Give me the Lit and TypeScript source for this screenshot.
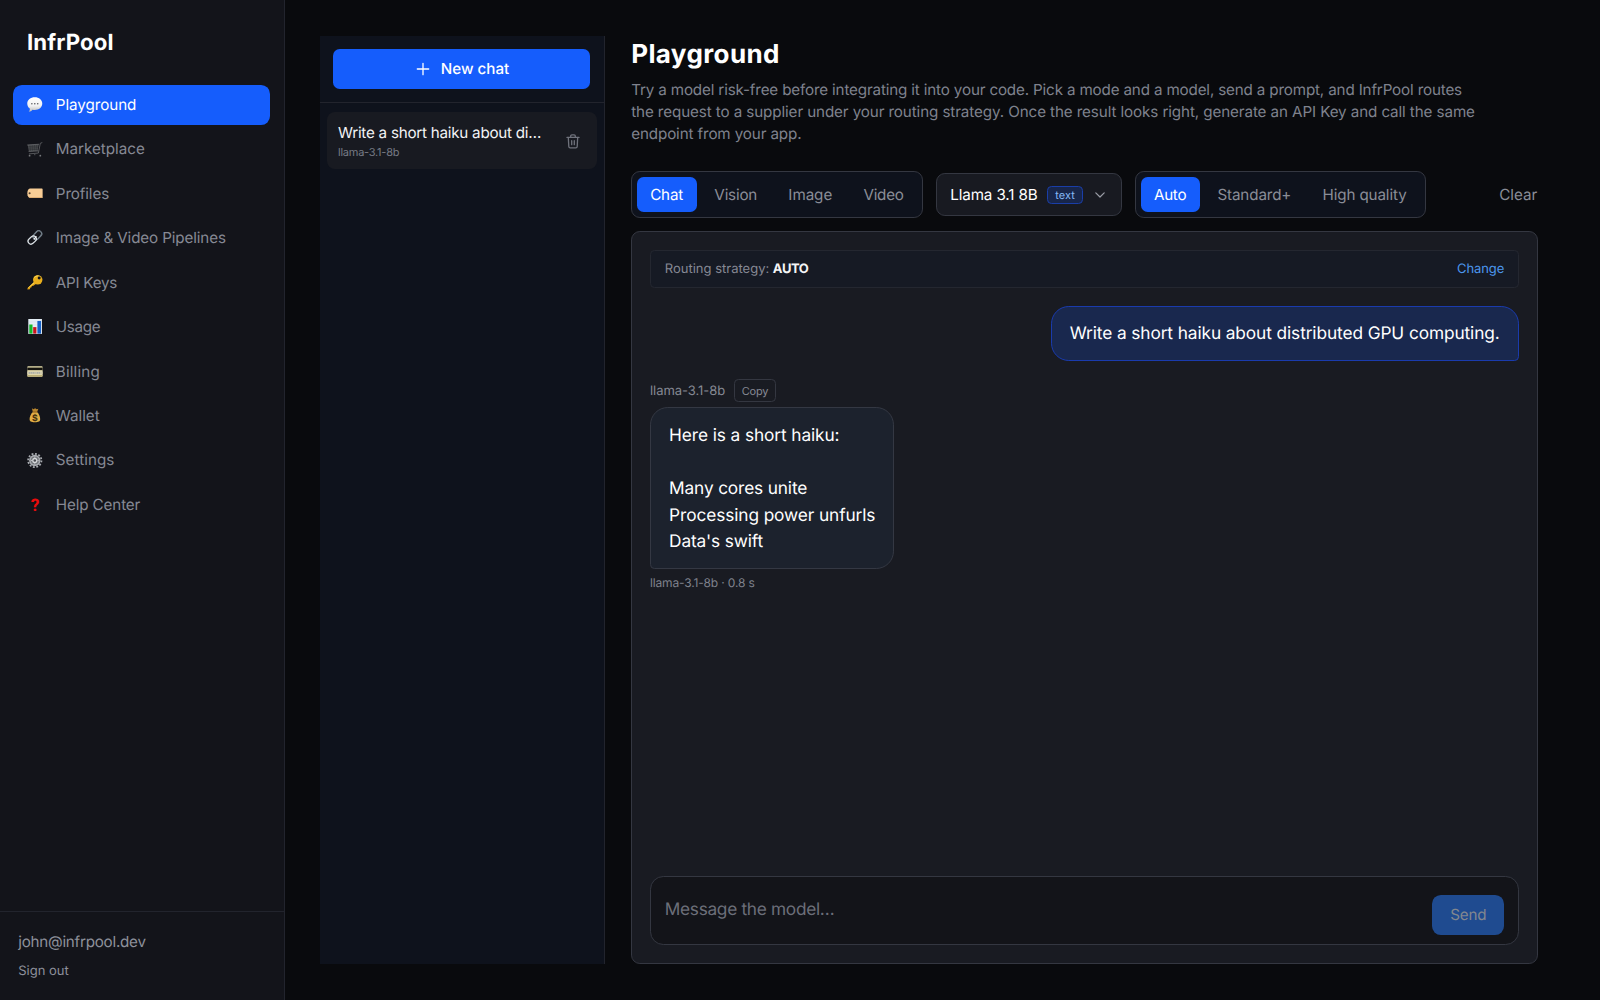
import { LitElement, html, css, svg, type TemplateResult, type SVGTemplateResult } from "lit";
import { customElement, property, state } from "lit/decorators.js";
import { classMap } from "lit/directives/class-map.js";

const ICONS: Record<string, SVGTemplateResult> = {
  chat: svg`
    <defs><linearGradient id="bub" x1="0" y1="0" x2="0" y2="1"><stop offset="0" stop-color="#ffffff"/><stop offset=".6" stop-color="#f1f1f1"/><stop offset="1" stop-color="#b9b9b9"/></linearGradient></defs>
    <path d="M24 .5C37 .5 47 8.500 47 20S37 40 24 40C21.500 40 19 39.700 17 39.100C14.500 42.500 10.500 45 5.500 45.500C8 42.500 9.200 39 8.600 35.700C4 32.300 .8 27 .8 20C.8 8.500 11 .5 24 .5Z" fill="url(#bub)"/>
    <g fill="#57575c"><circle cx="15" cy="21" r="2.400"/><circle cx="24" cy="21" r="2.400"/><circle cx="33" cy="21" r="2.400"/></g>`,
  cart: svg`
    <path d="M2 9L36 7L33 27L6 29Z" fill="#4c4e52"/>
    <g fill="none" stroke="#24262a" stroke-width="1.200"><path d="M4 14L35 12.500M4.500 19L34.500 17.500M5.500 24L34 22.500M9 9L11 29M16 8.500L17 28.500M23 8L22.500 28M30 7.500L28 27.500"/></g>
    <g fill="none" stroke="#6f7174" stroke-width="2.200" stroke-linecap="round"><path d="M46 2L41 4L35 34L7 36.500M2 9L36 7M6 29L34 27.500"/></g>
    <circle cx="8" cy="42" r="2.800" fill="#77797c"/><circle cx="41" cy="42" r="2.800" fill="#77797c"/><circle cx="24" cy="39" r="1.800" fill="#5d5f62"/>`,
  tag: svg`
    <path d="M10 8H46C47 8 48 9 48 10V35C48 36 47 37 46 37H10C5 37 1 31 1 22.500S5 8 10 8Z" fill="#f8cd95"/>
    <path d="M3 31C5 35 7 37 10 37H46C47 37 48 36 48 35V34H10C7 34 5 33 3 31Z" fill="#dfae74"/>
    <circle cx="8" cy="22.500" r="3.200" fill="#53412e"/>`,
  link: svg`
    <g fill="none" stroke-linecap="round">
      <rect x="-15" y="-9" width="30" height="18" rx="9" transform="translate(32 16) rotate(-47)" stroke="#8d9aa5" stroke-width="4"/>
      <rect x="-15" y="-9" width="30" height="18" rx="9" transform="translate(32 16) rotate(-47)" stroke="#27323b" stroke-width="1"/>
      <rect x="-14" y="-9" width="28" height="18" rx="9" transform="translate(16 31) rotate(-42)" stroke="#dde3e8" stroke-width="3.800"/>
      <path d="M22 28L28 20" stroke="#f4f6f8" stroke-width="3.500"/>
    </g>`,
  key: svg`
    <path d="M23 21L2 40L1 45L9 44L10 39L14 38L15 34L20 33L28 27Z" fill="#dd9d12"/>
    <path d="M23 20L3 39.500L4 41L25 24Z" fill="#fbd34a"/>
    <circle cx="33" cy="15" r="14.500" fill="#e8ae1c"/><path d="M20 12A14 14 0 0 1 44 6A18 18 0 0 0 20 12Z" fill="#ffe066"/>
    <circle cx="37.500" cy="9.500" r="4.600" fill="#14151a"/>`,
  chart: svg`
    <rect x="4" y="0" width="42" height="46" fill="#e3edf5"/>
    <path d="M4 9H46M4 18H46M4 27H46M4 36H46" stroke="#c3d4e2" stroke-width="1"/>
    <rect x="7" y="17" width="10" height="28" fill="#13b92a"/><rect x="19" y="25" width="10" height="20" fill="#c9131d"/><rect x="32" y="6" width="11" height="39" fill="#1460c8"/>`,
  card: svg`
    <rect x="1" y="7" width="47" height="32" rx="2.500" fill="#e9dfae"/>
    <rect x="1" y="11" width="47" height="8" fill="#15140f"/>
    <rect x="1" y="23" width="47" height="9" fill="#cfc9ac"/>
    <path d="M6 27.500H26M30 27.500H40" stroke="#8e9aa8" stroke-width="3" stroke-dasharray="4 2"/>
    <rect x="1" y="34" width="47" height="5" rx="2" fill="#b9ac74"/>`,
  bag: svg`
    <path d="M15 1L20 4L25 1L30 4L35 2L31 12H18Z" fill="#b9862f"/>
    <path d="M18 12H31C37 18 41 27 40.500 35C40 42 36 44 24 44S8.500 42 8 35C7.500 27 12 18 18 12Z" fill="#e2ae45"/>
    <path d="M17 12.500H32" stroke="#8a5a1b" stroke-width="3"/>
    <text x="24.200" y="39" font-family="Inter, sans-serif" font-weight="700" font-size="27" text-anchor="middle" fill="#47320f">$</text>`,
  gear: svg`
    <circle cx="24" cy="23" r="20.500" fill="none" stroke="#a8abb0" stroke-width="5.500" stroke-dasharray="5.800 4.930"/>
    <circle cx="24" cy="23" r="17.500" fill="#a9acb1"/>
    <circle cx="24" cy="23" r="12.500" fill="#73767b"/>
    <circle cx="24" cy="23" r="8" fill="#d6d8db"/><circle cx="24" cy="23" r="4" fill="#4a4c51"/>
    <path d="M24 11V15M24 31V35M12 23H16M32 23H36" stroke="#c4c6ca" stroke-width="3"/>`,
  help: svg`<text x="24.500" y="42" font-family="Roboto, sans-serif" font-weight="700" font-size="53" text-anchor="middle" fill="#ea0b0b">?</text>`,
};

interface NavItem { icon: string; label: string; track: string; }

const NAV: NavItem[] = [
  { icon: "chat", label: "Playground", track: "t05" },
  { icon: "cart", label: "Marketplace", track: "t00" },
  { icon: "tag", label: "Profiles", track: "t10" },
  { icon: "link", label: "Image & Video Pipelines", track: "t12" },
  { icon: "key", label: "API Keys", track: "t24" },
  { icon: "chart", label: "Usage", track: "t30" },
  { icon: "card", label: "Billing", track: "w15" },
  { icon: "bag", label: "Wallet", track: "t00" },
  { icon: "gear", label: "Settings", track: "w05" },
  { icon: "help", label: "Help Center", track: "t12" },
];

const tracking = css`
  .w15 { letter-spacing: 0.17px; }
  .w05 { letter-spacing: 0.06px; }
  .t00 { letter-spacing: 0; }
  .t05 { letter-spacing: -0.05px; }
  .t10 { letter-spacing: -0.1px; }
  .t12 { letter-spacing: -0.12px; }
  .t16 { letter-spacing: -0.155px; }
  .t20 { letter-spacing: -0.19px; }
  .t24 { letter-spacing: -0.24px; }
  .t30 { letter-spacing: -0.31px; }
  .t40 { letter-spacing: -0.41px; }
`;

@customElement("nav-sidebar")
export class NavSidebar extends LitElement {
  @state() private active = "Playground";

  static styles = [tracking, css`
    :host { display: flex; flex-direction: column; box-sizing: border-box; width: 285px; flex: none; background: #13141a; border-right: 1px solid #22242d; }
    .brand { padding: 27px 27px 0; height: 31px; line-height: 31px; font-size: 22.2px; font-weight: 700; letter-spacing: 0.12px; color: #fff; }
    .nav { display: flex; flex-direction: column; gap: 4.440px; padding: 26.900px 13.900px 0 13.400px; }
    .item { display: flex; align-items: center; gap: 13.300px; height: 40px; padding: 0 13.300px 0 13.500px; border-radius: 8.900px; color: #868994; cursor: pointer; line-height: 22px; }
    .item.active { background: #155dfc; color: #fff; }
    .icon { width: 15.600px; height: 15.600px; flex: none; overflow: visible; }
    .foot { margin-top: auto; box-sizing: border-box; height: 88.600px; border-top: 1px solid #22242d; padding: 18.800px 18.200px 0; color: #8d909a; }
    .mail { line-height: 22.200px; }
    .out { margin-top: 9.300px; font-size: 13px; line-height: 17.800px; }
  `];

  render() {
    return html`
      <div class="brand">InfrPool</div>
      <nav class="nav">
        ${NAV.map((n) => html`
          <div class=${classMap({ item: true, active: n.label === this.active })} @click=${() => (this.active = n.label)}>
            <svg class="icon" viewBox="0 0 48 48" aria-hidden="true">${ICONS[n.icon]}</svg>
            <span class=${n.track}>${n.label}</span>
          </div>`)}
      </nav>
      <div class="foot">
        <div class="mail t24">john@infrpool.dev</div>
        <div class="out">Sign out</div>
      </div>`;
  }
}

@customElement("chat-list")
export class ChatList extends LitElement {
  static styles = [tracking, css`
    :host { display: flex; flex-direction: column; box-sizing: border-box; width: 284.500px; flex: none; background: #0e121c; border-right: 1px solid #22242d; }
    .top { padding: 13.300px; border-bottom: 1px solid #22242d; }
    .new { display: flex; align-items: center; justify-content: center; gap: 11px; box-sizing: border-box; height: 40px; padding: 1px 0 0 1.500px; border-radius: 6.700px; background: #155dfc; color: #fff; font-weight: 500; line-height: 22px; }
    .plus { width: 14px; height: 14px; flex: none; }
    .row { display: flex; align-items: center; justify-content: space-between; box-sizing: border-box; height: 57px; margin: 9px 6.700px 0; padding: 1px 16.800px 0 11.300px; border-radius: 8px; background: #181a21; }
    .title { color: #f2f3f5; line-height: 22px; }
    .model { color: #777a85; font-size: 11px; line-height: 15px; margin-top: 1px; }
    .trash { width: 14px; height: 15px; flex: none; }
  `];

  render() {
    return html`
      <div class="top">
        <div class="new">
          <svg class="plus" viewBox="0 0 14 14" fill="none" stroke="#fff" stroke-width="1.300" stroke-linecap="round"><path d="M7 1.300V12.700M1.300 7H12.700"/></svg>
          <span>New chat</span>
        </div>
      </div>
      <div class="row">
        <div>
          <div class="title t24">Write a short haiku about di…</div>
          <div class="model t24">llama-3.1-8b</div>
        </div>
        <svg class="trash" viewBox="0 0 14 15" fill="none" stroke="#6f727c" stroke-width="1.300" stroke-linecap="round" stroke-linejoin="round">
          <path d="M1 3.400H13M4.700 3.400V2.100C4.700 1.400 5.200 .9 5.900 .9H8.100C8.800 .9 9.300 1.400 9.300 2.100V3.400M2.300 3.400L2.800 12.500C2.850 13.300 3.400 13.900 4.200 13.900H9.800C10.600 13.900 11.150 13.300 11.200 12.500L11.700 3.400M5.700 6.700V10.700M8.300 6.700V10.700"/>
        </svg>
      </div>`;
  }
}

@customElement("seg-control")
export class SegControl extends LitElement {
  @property({ attribute: false }) options: { label: string; track: string }[] = [];
  @property() value = "";

  static styles = [tracking, css`
    :host { display: flex; gap: 4.440px; padding: 4.440px 4.600px; box-sizing: border-box; height: 46.700px; border: 1px solid #343741; border-radius: 8.900px; background: #0e121c; }
    .opt { display: flex; align-items: center; justify-content: center; padding: 0 13.400px; border-radius: 6.700px; color: #8a8d97; cursor: pointer; white-space: nowrap; }
    .opt.on { background: #155dfc; color: #fff; }
  `];

  render() {
    return html`${this.options.map((o) => html`
      <div class=${classMap({ opt: true, on: o.label === this.value })} @click=${() => (this.value = o.label)}>
        <span class=${o.track}>${o.label}</span>
      </div>`)}`;
  }
}

@customElement("app-root")
export class AppRoot extends LitElement {
  static styles = [tracking, css`
    :host { display: flex; width: 100vw; height: 100vh; overflow: hidden; box-sizing: border-box; background: #090a0d; color: #fff; font-family: Inter, "Liberation Sans", sans-serif; font-size: 15.2px; font-weight: 400; text-rendering: geometricPrecision; -webkit-font-smoothing: antialiased; }
    .main { display: flex; flex: 1; min-width: 0; gap: 26.700px; padding: 35.600px 62.500px 35.600px 35px; }
    .content { display: flex; flex-direction: column; flex: 1; min-width: 0; }
    h1 { margin: 0; padding-top: 1px; font-size: 26px; font-weight: 700; line-height: 35.600px; letter-spacing: 0.38px; }
    .intro { margin: 6.600px 0 0; line-height: 22.200px; color: #7f828d; white-space: nowrap; }
    .line { display: block; }
    .tools { display: flex; align-items: center; gap: 13.300px; margin-top: 25.800px; height: 46.700px; }
    .select { display: flex; align-items: center; box-sizing: border-box; height: 42.200px; padding: 0 16px 0 13.300px; border: 1px solid #343741; border-radius: 8.900px; background: #181a21; }
    .badge { display: flex; align-items: center; justify-content: center; box-sizing: border-box; width: 36px; height: 18px; margin-left: 9.500px; border: 1px solid #1a3ea8; border-radius: 4.400px; background: #18264a; color: #86b8f5; font-size: 11px; }
    .chev { width: 10px; height: 6px; margin-left: 11.700px; }
    .clear { margin-left: auto; padding-right: 0.400px; color: #8a8d97; }
    .panel { display: flex; flex-direction: column; flex: 1; min-height: 0; box-sizing: border-box; margin-top: 13.300px; padding: 17.800px; border: 1px solid #343741; border-radius: 8.900px; background: #191b22; }
    .notice { display: flex; align-items: center; justify-content: space-between; box-sizing: border-box; height: 37.800px; padding: 1px 13.500px 0 13.800px; border: 1px solid #242730; border-radius: 4.400px; background: #161a24; color: #868994; font-size: 13px; flex: none; }
    .notice b { color: #f4f5f6; font-weight: 700; }
    .change { color: #4c97ee; }
    .bubble { box-sizing: border-box; border: 1px solid; padding: 14.800px 18px 12.100px 18.100px; font-size: 17.3px; line-height: 26.670px; white-space: nowrap; }
    .user { align-self: flex-end; margin-top: 17.800px; border-color: #1a3bad; border-radius: 17.800px 17.800px 4.400px 17.800px; background: #19284e; }
    .who { display: flex; align-items: center; gap: 8.900px; margin-top: 17.800px; height: 23.300px; font-size: 13px; line-height: 16px; color: #868994; }
    .who .name { padding-top: 1.200px; }
    .copy { display: flex; align-items: center; justify-content: center; box-sizing: border-box; width: 42px; height: 23px; border: 1px solid #343741; border-radius: 4.400px; font-size: 11px; }
    .bot { align-self: flex-start; margin-top: 4.600px; border-color: #343843; border-radius: 17.800px 17.800px 17.800px 4.400px; background: #1c222d; }
    .bot .line { min-height: 26.670px; }
    .meta { margin-top: 4.900px; font-size: 12px; line-height: 17.800px; color: #7f828d; }
    .composer { display: flex; justify-content: space-between; align-items: flex-start; box-sizing: border-box; height: 69px; margin: auto 0 0.800px; padding: 18px 13.300px 0 13.800px; border: 1px solid #343741; border-radius: 13.300px; background: #131419; }
    .hint { padding-top: 1.800px; font-size: 17.3px; line-height: 26.670px; color: #6c6f79; }
    .send { display: flex; align-items: center; justify-content: center; width: 72.200px; height: 40.300px; border-radius: 8.900px; background: #1f4b90; color: #82878f; }
  `];

  private line(text: string, track: string): TemplateResult {
    return html`<span class="line ${track}">${text}</span>`;
  }

  render() {
    return html`
      <nav-sidebar></nav-sidebar>
      <div class="main">
        <chat-list></chat-list>
        <div class="content">
          <h1>Playground</h1>
          <p class="intro">
            ${this.line("Try a model risk-free before integrating it into your code. Pick a mode and a model, send a prompt, and InfrPool routes", "t16")}
            ${this.line("the request to a supplier under your routing strategy. Once the result looks right, generate an API Key and call the same", "t10")}
            ${this.line("endpoint from your app.", "t12")}
          </p>
          <div class="tools">
            <seg-control value="Chat" .options=${[
              { label: "Chat", track: "t16" },
              { label: "Vision", track: "t20" },
              { label: "Image", track: "t05" },
              { label: "Video", track: "t24" },
            ]}></seg-control>
            <div class="select">
              <span class="t12">Llama 3.1 8B</span>
              <span class="badge">text</span>
              <svg class="chev" viewBox="0 0 10 6" fill="none" stroke="#9a9da6" stroke-width="1.200" stroke-linecap="round" stroke-linejoin="round"><path d="M.8 .8L5 5L9.200 .8"/></svg>
            </div>
            <seg-control value="Auto" .options=${[
              { label: "Auto", track: "t30" },
              { label: "Standard+", track: "t12" },
              { label: "High quality", track: "t12" },
            ]}></seg-control>
            <span class="clear t05">Clear</span>
          </div>
          <div class="panel">
            <div class="notice">
              <span>Routing strategy: <b class="t40">AUTO</b></span>
              <span class="change t10">Change</span>
            </div>
            <div class="bubble user t10">Write a short haiku about distributed GPU computing.</div>
            <div class="who"><span class="name t05">llama-3.1-8b</span><span class="copy t20">Copy</span></div>
            <div class="bubble bot">
              ${this.line("Here is a short haiku:", "t10")}
              ${this.line("", "t05")}
              ${this.line("Many cores unite", "t16")}
              ${this.line("Processing power unfurls", "t10")}
              ${this.line("Data's swift", "t16")}
            </div>
            <div class="meta t16">llama-3.1-8b · 0.8 s</div>
            <div class="composer">
              <span class="hint t30">Message the model…</span>
              <div class="send t20">Send</div>
            </div>
          </div>
        </div>
      </div>`;
  }
}
